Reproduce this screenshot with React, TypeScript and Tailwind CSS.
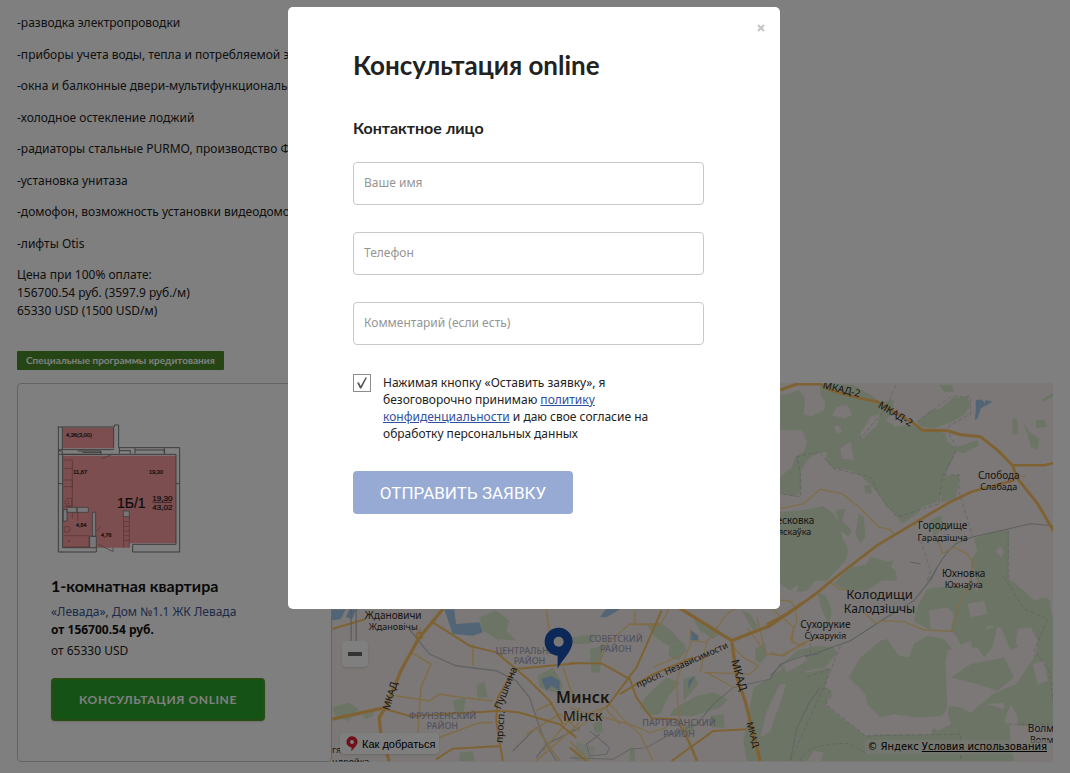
import React from "react";

const features = [
  "-разводка электропроводки",
  "-приборы учета воды, тепла и потребляемой электроэнергии",
  "-окна и балконные двери-мультифункциональные",
  "-холодное остекление лоджий",
  "-радиаторы стальные PURMO, производство Финляндия",
  "-установка унитаза",
  "-домофон, возможность установки видеодомофона",
  "-лифты Otis",
];

function FloorPlan() {
  return (
    <svg viewBox="0 0 420 435" className="block h-[145px] w-[140px]" fontFamily="'Liberation Sans', Arial, sans-serif" role="img" aria-label="План квартиры">
      <path d="M35 38H188V100H35ZM35 122H375V385H235V398H35Z" fill="#fb9ca0" />
      <g fill="none" stroke="#777" strokeWidth="3">
        <path d="M22 34V411H136V398M22 36H190V30H203V98H386V411H245V388H375V118H35V398H136M34 36V104M188 38V100" />
        <path d="M22 104H188M22 118H80M22 108H34V118M80 108H150V118H80M94 112H150M205 98V116M205 107H238V116M252 98V116M252 105H340V116M340 98V116M22 206H34M375 206H386" />
        <path d="M150 132L184 118M136 350L150 333M142 388L186 410V398M132 290V330M132 364V380" strokeWidth="2" />
      </g>
      <g fill="#eee" stroke="#666" strokeWidth="2">
        <path d="M48 277H78V292H48ZM78 277H112V292H78ZM217 288H235V305H217ZM116 364H136V398H116ZM124 292H134V364H124ZM37 284H48V318H37Z" />
      </g>
      <g fill="none" stroke="#a76468" strokeWidth="2">
        <path d="M38 135H64V275H38M38 160H64M38 195H64V215H38M45 250H62V272H45M40 362H114V396H40M218 305V398M235 305V398M218 320H235M218 334H235M218 348H235M218 362H235M218 376H235M64 292V310M80 292V318" />
        <circle cx="47" cy="262" r="6" />
        <circle cx="48" cy="343" r="9" />
      </g>
      <circle cx="54" cy="378" r="2" fill="#555" />
      <path d="M305 262H362" stroke="#222" strokeWidth="2" />
      <g fill="#181818" stroke="#181818" strokeWidth="0.6">
        <text x="45" y="66" fontSize="17">4,36(3,00)</text>
        <text x="67" y="178" fontSize="17">11,87</text>
        <text x="294" y="178" fontSize="17">19,30</text>
        <text x="75" y="336" fontSize="16">4,84</text>
        <text x="150" y="367" fontSize="16">4,76</text>
        <text x="198" y="278" fontSize="42">1Б/1</text>
        <text x="304" y="257" fontSize="24">19,30</text>
        <text x="304" y="284" fontSize="24">43,02</text>
      </g>
    </svg>
  );
}

function CityMap() {
  return (
    <svg viewBox="332 383 721 378" preserveAspectRatio="xMidYMid slice" className="block h-full w-full" fontFamily="'Noto Sans', sans-serif" role="img" aria-label="Карта Минска">
      <rect x="332" y="383" width="721" height="378" fill="#f7f1ee" />

      {/* north-east */}
      <g transform="translate(770 370) scale(.33333)">
        <g fill="#d8e9ca">
          <path d="M30 75L60 70 85 60 105 85 100 130 120 140 160 122 165 95 150 75 150 40 250 45 300 75 330 95 370 90 365 130 345 150 375 170 420 165 450 175 525 190 530 215 560 235 545 270 525 310 520 350 500 395 455 410 385 440 375 435 345 405 330 380 310 355 275 320 240 300 190 295 165 270 170 245 140 250 110 270 90 310 95 355 75 380 30 370 30 320 65 290 75 260 100 245 110 215 95 180 30 180Z" />
          <path d="M440 155L480 120 510 115 545 85 590 80 600 105 580 135 545 155 490 175 450 170ZM505 45L545 45 550 65 520 65ZM560 230L620 210 625 225 580 250 560 245ZM520 320L565 312 562 350 555 390 510 395ZM725 145L738 145 742 190 725 195ZM760 160L775 185 805 205 800 240 780 230ZM795 150L820 150 828 170 795 175ZM810 90L848 68 848 80 815 95Z" />
          <path d="M30 425L95 420 160 408 190 430 205 460 215 500 235 540 225 570 170 630H30ZM195 420L225 415 215 450 245 480 235 500 210 480ZM265 430L280 440 285 500 270 520 255 490ZM280 345L300 345 305 370 285 370ZM480 450L510 435 520 465 490 500ZM610 505L680 480 715 480 712 630H620L600 570 620 540ZM260 630L300 560 340 570 375 600 380 630ZM380 440L460 400 440 430 395 460Z" />
        </g>
        <path d="M200 110L230 105 245 135 220 145 185 135ZM270 190L300 140 330 130 320 165 275 205ZM210 235L240 215 250 270 215 265ZM675 540L690 530 700 545 690 560ZM190 170L205 165 215 185 200 190Z" fill="#f7f1ee" />
        <path d="M615 90L635 88 640 98 665 95 630 115 620 145 612 150 615 120ZM645 90L665 95 640 102Z" fill="#a5cbee" />
        <g fill="none" stroke="#b7bdbf" strokeWidth="2" strokeDasharray="12 7">
          <path d="M375 45L350 110 270 205M440 155L540 80 600 80 600 130 525 175 560 235 515 320 505 400 380 440 330 380 300 320 190 295 145 245 80 260 90 310 90 380 30 370M520 314H565V365L605 495M712 480V630M450 510L480 600 470 630" />
        </g>
        <path d="M605 500L780 460 848 466M480 630Q510 560 555 520L605 500" fill="none" stroke="#b9c0c0" strokeWidth="3" />
        <g fill="none" stroke="#ffdb94" strokeWidth="4" strokeLinejoin="round">
          <path d="M30 415L100 400 150 357 215 370 265 410 325 470 360 478 370 492M500 500L515 550 550 530 590 550 605 575 600 630M735 318L765 318" />
        </g>
        <g fill="none" stroke="#ffc568" strokeWidth="9" strokeLinejoin="round">
          <path d="M30 60L80 42 150 42 180 60 270 85 320 95 430 160 455 180 530 182 570 194 630 200 680 240 725 285 740 325 800 400 848 482" />
          <path d="M725 285H820L848 278M730 330L600 365 530 400 420 465 320 525 190 625" strokeWidth="8" />
        </g>
      </g>

      {/* south-east */}
      <g transform="translate(770 560) scale(.33333)">
        <g fill="#d8e9ca">
          <path d="M30 0H200L170 50 100 60 60 90 30 70ZM85 60L120 40 135 60 110 90 80 95ZM140 95L165 105 185 150 175 190 155 150ZM470 85L540 75 605 80 650 115 700 100 740 130 790 160 830 160 848 180 848 600H0L45 350 70 345 180 320 165 380 185 390 165 430 200 460 285 525 330 520 480 520 490 500 530 470 535 435 570 440 600 455 665 400 735 370 790 290 770 240 720 270 690 200 650 195 620 260 575 265 560 230 545 215 470 205 430 180 440 140Z" />
          <path d="M270 290L330 240 350 235 385 285 415 290 430 250 470 225 520 235 545 265 525 300 530 440 515 465 440 470 370 460 330 470 290 430 285 400 260 375 235 350ZM610 0L690 0 705 50 735 70 790 120 830 110 848 180 780 190 700 170 630 150ZM35 310L80 270 140 255 190 260 200 275 165 320 60 340ZM300 10L370 0 350 50 290 90 230 90 190 70 240 20ZM790 130L815 110 840 120 830 160 790 155Z" />
        </g>
        <path d="M475 150L530 140 550 160 540 210 480 205ZM530 270L600 240 610 290 580 330 540 350 525 310ZM530 365L590 355 665 400 600 455 570 440 530 430ZM620 290L660 240 680 200 700 240 725 290 770 300 740 350 680 385 640 330ZM740 205L780 200 800 240 795 280 760 290 735 245ZM785 310L820 300 830 360 800 370ZM650 430L700 425 700 445ZM720 430L740 465 740 520 700 480ZM0 380L45 350 0 560ZM130 570L160 575 150 600 110 600ZM715 495H848V600H730ZM590 130L640 120 650 160 600 170ZM480 490L530 450 540 490 500 510Z" fill="#f7f1ee" />
        <path d="M600 310L700 290 730 350 680 390 620 370 540 350ZM630 210L680 195 665 260 640 290 620 260Z" fill="#d8e9ca" />
        <g fill="none" stroke="#b7bdbf" strokeWidth="2" strokeDasharray="12 7">
          <path d="M210 255L160 380 185 400 165 430 285 525 570 520V600M160 380L60 600M30 315L90 355 180 325M120 210V285M700 50L760 145 830 175 790 270 835 330 848 430M712 490H848M90 600Q110 545 240 548L290 580" />
        </g>
        <path d="M0 345L35 310 130 280 240 240 340 175 430 120 470 70 500 20M420 5L450 10" fill="none" stroke="#b9c0c0" strokeWidth="3" />
        <path d="M605 0L600 70 565 130 545 212 460 208 400 183 340 180 315 188 280 155M0 275L30 285 110 245M75 140L80 180 60 235 80 250M180 65L205 85 240 90 250 120M0 115L60 122 80 145" fill="none" stroke="#ffdb94" strokeWidth="4" />
        <path d="M-10 192L60 155 140 97 190 55" fill="none" stroke="#ffc568" strokeWidth="9" />
      </g>

      {/* city centre, east */}
      <g transform="translate(570 600) scale(.33333)">
        <g fill="#d8e9ca">
          <path d="M230 70L270 65 305 90 335 125 295 135 250 105ZM300 135L340 125 350 150 325 180 295 165ZM370 55L410 70 450 100 430 115 390 90ZM60 145L100 135 90 215 65 215ZM10 110L80 100 60 130 10 130ZM210 320L230 285 290 230 330 245 300 280 270 340 240 345ZM340 235L375 225 385 250 355 285 340 300ZM310 325L380 285 430 275 475 295 450 320 370 345 300 345ZM515 30L540 40 565 80 550 90ZM555 145L585 125 590 165 570 190 555 175ZM70 370L95 355 100 395 75 395ZM345 375L375 365 370 390 345 395ZM420 345L460 340 465 380 425 380ZM530 480L520 420 550 260 600 230 640 200 700 190 720 260 740 260 600 480ZM180 440H195V480H180ZM580 0H615L590 15Z" />
          <path d="M20 420L80 440 60 480H10Z" opacity=".5" />
        </g>
        <path d="M630 250L648 250 625 320 600 390 570 410 590 330ZM640 190L700 160 710 180 650 215Z" fill="#f7f1ee" />
        <path d="M90 50L120 10 150 27 110 50ZM362 88L385 105 385 120 360 118ZM355 240L375 225 355 265Z" fill="#a5cbee" />
        <g fill="none" stroke="#c3c6ca" strokeWidth="3">
          <path d="M0 470L130 475 180 445 230 440 300 400 380 370 430 310 490 260 600 235 630 190 700 165 750 160M60 390L120 440 110 460 60 465 50 430 90 400M660 480L680 380 720 300 750 260" />
        </g>
        <g fill="none" stroke="#ffdb94" strokeWidth="4">
          <path d="M0 320L60 340 180 370 240 395 290 380M120 310L165 360 210 400 250 480M0 400L120 310M60 480L0 420M90 185L110 130 180 70 270 75 300 20M195 30V75M175 70L270 70M360 85L365 120 345 170 320 240 325 340 350 400 385 480M365 120L410 125 470 40 520 10M410 125L390 215M480 130L520 170 565 195 540 220 400 215M530 80L590 160 640 165 700 125 750 110M560 50L580 130M330 165L250 200M600 20L670 80 665 125 700 135M410 215L490 260M0 365L50 340 105 320 150 370" />
        </g>
        <g fill="none" stroke="#ffc568" strokeLinejoin="round">
          <path d="M0 187L95 188 180 235 200 290 245 352 320 355M305 480L430 390 530 385M320 355L355 420 380 480M0 440L50 480M110 320L200 200 275 30M150 280L250 220 370 170" strokeWidth="6" />
          <path d="M325 20L485 120 600 75 700 5M485 120L500 230 525 300 570 480" strokeWidth="10" />
        </g>
      </g>

      {/* city centre, west */}
      <g transform="translate(330 600) scale(.33333)">
        <g fill="#d8e9ca">
          <path d="M450 50L500 30 540 60 530 90 560 120 500 115 460 90ZM10 320L60 305 90 325 60 360 20 350ZM90 330L140 325 130 345 110 355ZM440 255L465 240 475 290 445 290ZM370 300L410 290 400 345 375 330ZM390 455L430 450 435 480H390ZM625 225L670 200 700 250 690 280 630 260ZM265 90L275 80 275 115Z" />
        </g>
        <g fill="#a5cbee">
          <path d="M8 27H50L35 55 8 60ZM345 27H375L380 70 450 65 460 95 430 105 370 100ZM635 235L665 225 690 240 690 270 665 255 650 270ZM60 27H80L70 55 50 50Z" />
        </g>
        <g fill="none" stroke="#c3c6ca" strokeWidth="4">
          <path d="M240 85L300 160 380 195 500 210 560 240 600 290 630 380 650 430 680 480M550 450L620 380M620 470L650 430 750 380" />
        </g>
        <g fill="none" stroke="#ffdb94" strokeWidth="5">
          <path d="M245 155L305 190 275 260 270 340 265 400M200 285L300 300 330 280 400 290 490 300M330 410L450 365 490 365M430 130V195M650 25L660 100M700 200L720 260 740 300M620 330L670 305M590 400L690 340 750 390M620 480L750 365M690 480L620 380M750 320L640 450" />
        </g>
        <g fill="none" stroke="#ffc568" strokeLinejoin="round">
          <path d="M310 65L350 90 420 135 500 155 560 205 660 195 750 187M555 205L505 290 500 360 510 420 520 480M560 205L600 240 660 300 700 370M170 325L240 345 520 330 570 335 620 350 690 370 740 410M320 475L370 443 515 435M10 85L110 55" strokeWidth="6" />
          <path d="M345 20L300 75 270 110 215 210 170 320 150 350 155 400 180 480M10 355L160 322" strokeWidth="10" />
          <circle cx="270" cy="105" r="9" strokeWidth="5" />
        </g>
      </g>

      <g fill="#a6a7c0" fontSize="9" textAnchor="middle" fontWeight="500">
        <text x="530" y="653">ЦЕНТРАЛЬНЫЙ</text>
        <text x="530" y="663">РАЙОН</text>
        <text x="616" y="641">СОВЕТСКИЙ</text>
        <text x="616" y="651">РАЙОН</text>
        <text x="443" y="718">ФРУНЗЕНСКИЙ</text>
        <text x="443" y="728">РАЙОН</text>
        <text x="679" y="725">ПАРТИЗАНСКИЙ</text>
        <text x="679" y="736">РАЙОН</text>
      </g>
      <g fill="#2c2c2c" textAnchor="middle" fontSize="10">
        <text x="394" y="618">Ждановичи</text>
        <text x="394" y="629" fontSize="9">Ждановічы</text>
        <text x="998" y="479" fontSize="10">Слобода</text>
        <text x="998" y="490" fontSize="9">Слабада</text>
        <text x="942" y="529" fontSize="10">Городище</text>
        <text x="942" y="541" fontSize="9">Гарадзішча</text>
        <text x="963" y="576" fontSize="10">Юхновка</text>
        <text x="963" y="587" fontSize="9">Юхнаўка</text>
        <text x="879" y="598" fontSize="13">Колодищи</text>
        <text x="879" y="612" fontSize="12">Калодзішчы</text>
        <text x="825" y="627">Сухорукие</text>
        <text x="825" y="638" fontSize="9">Сухарукія</text>
        <text x="583" y="702" fontSize="16" fontWeight="600">Минск</text>
        <text x="583" y="720" fontSize="14">Мінск</text>
      </g>
      <g fill="#2c2c2c" fontSize="10">
        <text x="814" y="524" textAnchor="end">Лесковка</text>
        <text x="811" y="535" textAnchor="end" fontSize="9">Ляскаўка</text>
        <text x="1027" y="731">Волма</text>
        <text x="1029" y="742" fontSize="9">Волма</text>
        <text x="333" y="752" fontSize="9">гя</text>
        <text x="333" y="764" fontSize="9">цдройка</text>
        <text transform="translate(822 388) rotate(14)">МКАД-2</text>
        <text transform="translate(877 407) rotate(31)">МКАД-2</text>
        <text transform="translate(390 710) rotate(-73)">МКАД</text>
        <text transform="translate(503 742) rotate(-86)">просп.</text>
        <text transform="translate(501 709) rotate(-68)">Пушкина</text>
        <text transform="translate(638 687) rotate(-24)" fontSize="9">просп. Независимости</text>
        <text transform="translate(731 660) rotate(74)" fontSize="11">МКАД</text>
        <text transform="translate(746 722) rotate(74)" fontSize="9">МКАД</text>
      </g>

      <path d="M558 668L558 655A14 14 0 1 1 573 641C572 652 562 659 558 668Z" fill="#1750b0" />
      <circle cx="559" cy="641" r="5" fill="#f4f1ee" />
      <path d="M352 600V641M357 600V641" stroke="#aaa" strokeWidth="1" />
    </svg>
  );
}

function Field({ id, placeholder, type = "text" }: { id: string; placeholder: string; type?: string }) {
  return (
    <input
      id={id}
      type={type}
      aria-label={placeholder}
      placeholder={placeholder}
      className="h-[43px] w-full rounded border border-[#c8c8c8] bg-white px-2.5 pb-0.5 text-xs text-[#222] placeholder:text-[#959595]"
    />
  );
}

export default function App() {
  return (
    <div className="min-h-screen bg-white px-[17px] pt-3.5 pb-3 font-['Noto_Sans',sans-serif] text-xs leading-[18px] text-[#222]">
      <div className="flex h-[306px] flex-col justify-between">
        {features.map((f) => (
          <p key={f}>{f}</p>
        ))}
        <p>
          Цена при 100% оплате:
          <br />
          156700.54 руб. (3597.9 руб./м)
          <br />
          65330 USD (1500 USD/м)
        </p>
      </div>

      <div className="mt-[31px] flex">
        <span className="rounded-[1px] bg-[#4a8c28] px-[9px] font-['Lato',sans-serif] text-[10px] leading-[19px] font-bold text-white">
          Специальные программы кредитования
        </span>
      </div>

      <div className="mt-[13px] flex">
        <article className="w-[315px] shrink-0 rounded border border-[#c4c7cc] px-[33px] pb-10">
          <div className="pt-[31px]">
            <FloorPlan />
          </div>
          <h2 className="mt-4 font-['Lato',sans-serif] text-base leading-5 font-bold text-[#111]">1-комнатная квартира</h2>
          <a href="#levada" className="mt-[7px] block text-[#3a5592]">«Левада», Дом №1.1 ЖК Левада</a>
          <p className="font-bold text-[#111]">от 156700.54 руб.</p>
          <p className="mt-[3px]">от 65330 USD</p>
          <button
            type="button"
            className="mt-[18px] h-[43px] w-[214px] rounded border-2 border-[#4f9a25] bg-[#2aa52a] font-['Lato',sans-serif] text-xs font-bold tracking-wider text-white shadow"
          >
            КОНСУЛЬТАЦИЯ ONLINE
          </button>
        </article>

        <section className="relative min-w-0 flex-1 overflow-hidden">
          <div className="absolute inset-0">
            <CityMap />
          </div>
          <button type="button" aria-label="Уменьшить" className="absolute bottom-[95px] left-2.5 flex h-[26px] w-[26px] items-center justify-center rounded-sm bg-white shadow">
            <span className="h-1 w-3.5 bg-[#666]" />
          </button>
          <button type="button" className="absolute bottom-2 left-2 flex h-[21px] items-center gap-1 rounded-sm bg-white pr-1 pl-1.5 font-['Liberation_Sans',Arial,sans-serif] text-[11px] text-black shadow">
            <svg viewBox="0 0 12 16" className="h-4 w-3">
              <path d="M5.5 15.5L5.500 11.500A5.600 5.600 0 1 1 11.600 6C11.200 10.200 7.200 12 5.500 15.500Z" fill="#e0202e" />
              <circle cx="6" cy="6" r="2" fill="#fff" />
            </svg>
            Как добраться
          </button>
          <p className="absolute right-1 bottom-2 bg-[#f4f4ec]/60 px-0.5 font-['DejaVu_Sans',sans-serif] text-[10px] leading-[14px] text-black">
            © Яндекс <a href="#terms" className="underline">Условия использования</a>
          </p>
        </section>
      </div>

      <div className="fixed inset-0 flex items-start justify-center bg-black/50 pt-[7px] pr-0.5">
        <div role="dialog" aria-modal="true" aria-labelledby="dialog-title" className="relative w-[492px] rounded-[5px] bg-white pt-[41px] pr-[76px] pb-[95px] pl-[65px]">
          <button type="button" aria-label="Закрыть" className="absolute top-3.5 right-3 flex h-3.5 w-3.5 items-center justify-center text-[#c4c4c4]">
            <svg viewBox="0 0 8 8" className="h-2 w-2">
              <path d="M1 1L7 7M7 1L1 7" stroke="currentColor" strokeWidth="2" fill="none" />
            </svg>
          </button>
          <h1 id="dialog-title" className="font-['Lato',sans-serif] text-[26px] leading-[34px] font-bold">Консультация online</h1>
          <h2 className="mt-9 font-['Lato',sans-serif] text-base leading-5 font-bold">Контактное лицо</h2>
          <form className="mt-6" onSubmit={(e) => e.preventDefault()}>
            <div className="flex flex-col gap-[27px]">
              <Field id="name" placeholder="Ваше имя" />
              <Field id="phone" type="tel" placeholder="Телефон" />
              <Field id="comment" placeholder="Комментарий (если есть)" />
            </div>
            <div className="mt-[29px] flex items-start gap-3">
              <span className="relative h-[18px] w-[18px] shrink-0">
                <input id="consent" type="checkbox" defaultChecked className="peer block h-[18px] w-[18px] appearance-none border border-[#8c8c8c] bg-white" />
                <svg viewBox="0 0 18 18" className="pointer-events-none absolute inset-0 hidden h-[18px] w-[18px] peer-checked:block">
                  <path d="M4 8.500L6 8.500 7.700 12 12.500 3.500 14 3.500 8.300 14.500 7 14.500Z" fill="#555" />
                </svg>
              </span>
              <label htmlFor="consent" className="w-[272px] leading-[17px]">
                Нажимая кнопку «Оставить заявку», я безоговорочно принимаю{" "}
                <a href="#privacy" className="text-[#2f509c] underline">политику конфиденциальности</a> и даю свое согласие на обработку персональных данных
              </label>
            </div>
            <button type="submit" className="mt-[29px] h-[43px] w-[220px] rounded bg-[#96aad4] font-['Roboto',sans-serif] text-[17px] text-white">
              ОТПРАВИТЬ ЗАЯВКУ
            </button>
          </form>
        </div>
      </div>
    </div>
  );
}
